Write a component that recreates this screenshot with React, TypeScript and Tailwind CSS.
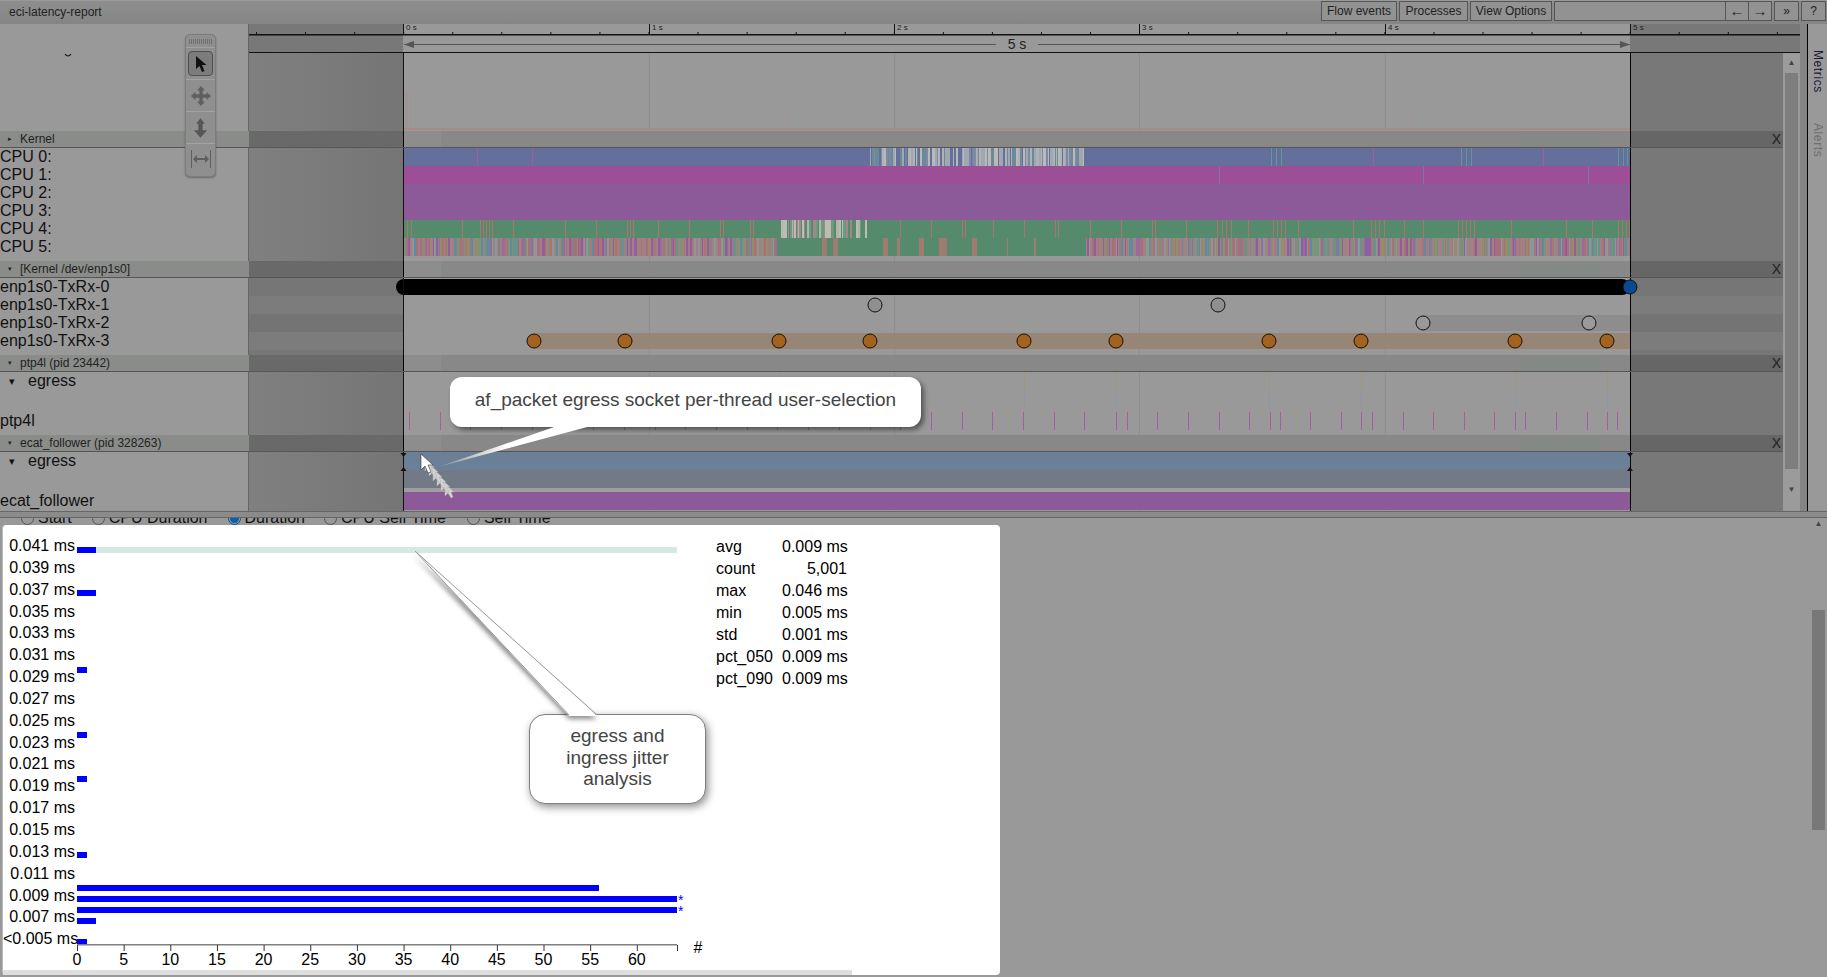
import type { ReactNode } from "react";

const ORANGE_X = [534, 625, 779, 870, 1024, 1116, 1269, 1361, 1515, 1607];
const GRID_X = [649, 894, 1139, 1385];

// small repeatable random so the stripes stay the same on each load
function rng(seed: number) {
  let s = seed;
  return () => {
    s = (s * 16807) % 2147483647;
    return s / 2147483647;
  };
}

function stripes(seed: number, from: number, to: number, colors: string[], minW = 1, maxW = 2) {
  const r = rng(seed);
  const out: { x: number; w: number; c: string }[] = [];
  let x = from;
  while (x < to) {
    const w = Math.min(minW + Math.floor(r() * (maxW - minW + 1)), to - x);
    out.push({ x, w, c: colors[Math.floor(r() * colors.length)] });
    x += w;
  }
  return out;
}

const CPU5_COLORS = ["#a07a7c", "#a08082", "#a87276", "#a08082", "#6a928a", "#5f8aa0", "#986aa0", "#a08480", "#968c66", "#8c9898", "#945ca0", "#a86e7a", "#7a947a"];
const CPU0_MID = stripes(7, 870, 1084, ["#aeb2b4", "#64709b", "#b8bab6", "#6a8a9a", "#8088a4", "#a0a6b2"]);
const CPU4_MID = stripes(11, 781, 868, ["#b2b4a8", "#558a6d", "#bcbcb0", "#a08888", "#6a9a80"]);
const CPU5_A = stripes(13, 403, 777, CPU5_COLORS);
const CPU5_B = stripes(17, 1086, 1630, CPU5_COLORS);
const CPU5_C = stripes(19, 777, 1086, ["#558a6d", "#558a6d", "#558a6d", "#558a6d", "#558a6d", "#558a6d", "#558a6d", "#558a6d", "#558a6d", "#a07c70"], 1, 5);
const CPU4_RED = [407, 411, 462, 480, 483, 486, 489, 492, 513, 565, 596, 627, 630, 633, 658, 689, 720, 723, 750, 753, 900, 931, 962, 965, 993, 1024, 1055, 1058, 1090, 1121, 1152, 1155, 1186, 1217, 1222, 1226, 1231, 1248, 1273, 1277, 1281, 1285, 1298, 1353, 1371, 1375, 1379, 1384, 1404, 1423, 1458, 1462, 1466, 1470, 1474, 1511, 1566, 1592, 1618, 1622, 1626, 1629];
const PTP_TICKS = [
  ...Array.from({ length: 23 }, (_, i) => Math.round(409 + i * 30.7)),
  1023, 1116, 1127, 1157, 1188, 1219, 1249, 1270, 1280, 1310, 1341, 1361, 1372, 1403, 1433, 1464, 1494, 1515, 1525, 1556, 1587, 1607, 1617,
];

const HIST_LABELS = ["0.041", "0.039", "0.037", "0.035", "0.033", "0.031", "0.029", "0.027", "0.025", "0.023", "0.021", "0.019", "0.017", "0.015", "0.013", "0.011", "0.009", "0.007", "<0.005"];
const HIST_BARS = [
  { y: 547, w: 19 },
  { y: 590, w: 19 },
  { y: 667, w: 10 },
  { y: 732, w: 10 },
  { y: 776, w: 10 },
  { y: 852, w: 10 },
  { y: 885, w: 522 },
  { y: 896, w: 600 },
  { y: 907, w: 600 },
  { y: 918, w: 19 },
  { y: 939, w: 10 },
];
const STATS = [
  ["avg", "0.009 ms"],
  ["count", "5,001"],
  ["max", "0.046 ms"],
  ["min", "0.005 ms"],
  ["std", "0.001 ms"],
  ["pct_050", "0.009 ms"],
  ["pct_090", "0.009 ms"],
];

function TopBar() {
  const btn = "h-[20px] flex items-center justify-center border border-[#555] bg-[#929292] text-[12px] text-[#222]";
  return (
    <div className="h-[24px] flex items-start justify-between bg-linear-to-b from-[#8e8e8e] to-[#858585] border-t border-[#9a9a9a]">
      <div className="pl-[9px] pt-[2px] text-[12px] text-[#222]">eci-latency-report</div>
      <div className="flex gap-[2px] pr-[1px]">
        <div className={`${btn} w-[76px]`}>Flow events</div>
        <div className={`${btn} w-[69px]`}>Processes</div>
        <div className={`${btn} w-[82px]`}>View Options</div>
        <div className="flex">
          <div className={`${btn} w-[172px]`} />
          <div className={`${btn} w-[24px] -ml-px text-[15px]`}>←</div>
          <div className={`${btn} w-[24px] -ml-px text-[15px]`}>→</div>
        </div>
        <div className={`${btn} w-[25px]`}>»</div>
        <div className={`${btn} w-[25px]`}>?</div>
      </div>
    </div>
  );
}

function Ruler() {
  const minor: number[] = [];
  for (let x = 256; x < 1800; x += 49.06) minor.push(x);
  const majors = [
    { x: 403, t: "0 s" },
    { x: 649, t: "1 s" },
    { x: 894, t: "2 s" },
    { x: 1139, t: "3 s" },
    { x: 1385, t: "4 s" },
    { x: 1630, t: "5 s" },
  ];
  return (
    <div className="h-[29px] flex">
      <div className="w-[249px] bg-[#999] border-r border-[#666]" />
      <svg width={1551} height={29} viewBox="249 24 1551 29" className="block">
        <rect x={249} y={24} width={1551} height={29} fill="#787878" />
        <rect x={403} y={24} width={1227} height={29} fill="#999" />
        {minor.map((x) => (
          <rect key={x} x={x} y={32} width={1} height={3} fill="#111" />
        ))}
        {majors.map((m) => (
          <g key={m.x}>
            <rect x={m.x} y={24} width={1} height={11} fill="#111" />
            <text x={m.x + 3} y={30} fontSize={8} fill="#222">{m.t}</text>
          </g>
        ))}
        <rect x={249} y={34} width={1551} height={1.5} fill="#111" />
        <rect x={249} y={52} width={1551} height={1.5} fill="#111" />
        <rect x={404} y={44} width={592} height={1} fill="#555" />
        <rect x={1038} y={44} width={592} height={1} fill="#555" />
        <path d="M404 44.5 L414 41 L414 48 Z" fill="#555" />
        <path d="M1630 44.5 L1620 41 L1620 48 Z" fill="#555" />
        <text x={1017} y={49} fontSize={14} textAnchor="middle" fill="#222">5 s</text>
      </svg>
    </div>
  );
}

function Header({ title, closed }: { title: string; closed?: boolean }) {
  return (
    <div className="h-[17px] flex border-b border-[#555]">
      <div className="w-[249px] bg-[#8a8c8a] flex items-center text-[12px] text-[#222]">
        <span className="w-[20px] pl-[8px] text-[7px]">{closed ? "▸" : "▾"}</span>
        {title}
      </div>
      <div className="w-[154px] bg-[#696969]" />
      <div className="w-[1227px] bg-[#888] border-l border-black flex justify-between">
        <div className="w-[37px] bg-[#8d8d8d]" />
        <div className="w-[80px] mr-[30px] bg-[#858985]" />
      </div>
      <div className="w-[153px] bg-[#666] border-l border-black flex items-center justify-end pr-[2px] text-[14px] text-[#222]">X</div>
    </div>
  );
}

function Section({ height, labels, gutter, children }: { height: number; labels?: ReactNode; gutter?: ReactNode; children?: ReactNode }) {
  return (
    <div className="flex" style={{ height }}>
      <div className="w-[249px] bg-[#999] border-r border-[#666] text-[16px] leading-[18px] text-[#111] whitespace-nowrap">{labels}</div>
      <div className="w-[154px] flex flex-col bg-linear-to-r from-[#808080] to-[#757575]">{gutter}</div>
      <svg width={1227} height={height} viewBox={`403 0 1227 ${height}`} className="block relative overflow-visible bg-[#999]">
        {GRID_X.map((x) => (
          <rect key={x} x={x} y={0} width={1} height={height} fill="#8d8d8d" />
        ))}
        {children}
        <rect x={403} y={0} width={1} height={height} fill="#111" />
      </svg>
      <div className="w-[153px] flex flex-col bg-[#787878] border-l border-black">{gutter}</div>
    </div>
  );
}

function Dot({ x, y, fill }: { x: number; y: number; fill: string }) {
  return <circle cx={x} cy={y} r={7} fill={fill} stroke="#111" strokeWidth={1} />;
}

function Toolbar() {
  return (
    <div className="absolute left-[185px] top-[34px] w-[31px] h-[143px] z-20 flex flex-col items-center rounded-[5px] border border-[#7c7c7c] bg-[#8f8f8f] shadow-[0_1px_2px_rgba(0,0,0,0.3)]">
      <div className="h-[13px] w-full flex items-center justify-center border-b border-[#a2a2a2]">
        <div className="w-[24px] h-[5px] bg-[repeating-linear-gradient(90deg,#707070_0,#707070_1px,#8f8f8f_1px,#8f8f8f_2px)]" />
      </div>
      <div className="h-[32px] w-full flex items-center justify-center border-b border-[#a2a2a2]">
        <div className="w-[25px] h-[25px] flex items-center justify-center rounded-[4px] border border-[#4f4f4f] bg-[#7c7c7c]">
          <svg width={14} height={18} viewBox="0 0 14 18">
            <path d="M2 1 L2 14 L5.5 11 L8 17 L10.5 16 L8 10 L12.5 10 Z" fill="#111" />
          </svg>
        </div>
      </div>
      <div className="h-[32px] w-full flex items-center justify-center border-b border-[#a2a2a2]">
        <svg width={20} height={20} viewBox="0 0 18 18" fill="#5f5f5f">
          <path d="M9 0 L12.5 4 L10.5 4 L10.5 7.5 L14 7.5 L14 5.5 L18 9 L14 12.5 L14 10.5 L10.5 10.5 L10.5 14 L12.5 14 L9 18 L5.5 14 L7.5 14 L7.5 10.5 L4 10.5 L4 12.5 L0 9 L4 5.5 L4 7.5 L7.5 7.5 L7.5 4 L5.5 4 Z" />
        </svg>
      </div>
      <div className="h-[32px] w-full flex items-center justify-center border-b border-[#a2a2a2]">
        <svg width={13} height={20} viewBox="0 0 12 18" fill="#565656">
          <path d="M6 0 L10 5 L8 5 L8 11 L12 11 L6 18 L0 11 L4 11 L4 5 L2 5 Z" />
        </svg>
      </div>
      <div className="flex-1 w-full flex items-center justify-center pb-[2px]">
        <svg width={20} height={18} viewBox="0 0 20 18" fill="#5f5f5f">
          <rect x={0} y={0} width={1} height={18} />
          <rect x={19} y={0} width={1} height={18} />
          <path d="M2 9 L6 5 L6 8 L14 8 L14 5 L18 9 L14 13 L14 10 L6 10 L6 13 Z" />
        </svg>
      </div>
    </div>
  );
}

function Callouts() {
  return (
    <>
      <div className="absolute left-[450px] top-[377px] w-[471px] h-[50px] z-30 flex items-center justify-center pb-[3px] rounded-[12px] bg-white shadow-[3px_3px_5px_rgba(0,0,0,0.45)] text-[19px] text-[#444] whitespace-nowrap">
        af_packet egress socket per-thread user-selection
      </div>
      <svg width={170} height={44} viewBox="430 426 170 44" className="absolute left-[430px] top-[426px] z-30">
        <defs>
          <linearGradient id="wedge" x1="0" x2="1" y1="0" y2="0">
            <stop offset="0" stopColor="#8f8f8f" />
            <stop offset="0.45" stopColor="#fff" />
          </linearGradient>
        </defs>
        <path d="M557 426 L591 426 L438 467 Z" fill="url(#wedge)" />
      </svg>
      <svg width={200} height={175} viewBox="410 546 200 175" className="absolute left-[410px] top-[546px] z-30 overflow-visible">
        <defs>
          <filter id="blur" x="-20%" y="-20%" width="140%" height="140%">
            <feGaussianBlur stdDeviation="2.5" />
          </filter>
        </defs>
        <path d="M415 551 L572 716 L600 716 Z" fill="#000" opacity={0.45} filter="url(#blur)" transform="translate(-3 3)" />
        <path d="M415 551 L569 716 L597 716 Z" fill="#fff" />
        <path d="M569 715 L415 551 L597 715" fill="none" stroke="#999" strokeWidth={1} />
      </svg>
      <div className="absolute left-[529px] top-[714px] w-[177px] h-[90px] z-20 flex items-center justify-center pb-[3px] rounded-[16px] border border-[#808080] bg-white shadow-[2px_3px_8px_rgba(0,0,0,0.45)] text-center text-[19px] leading-[21.5px] text-[#444]">
        <div>
          egress and
          <br />
          ingress jitter
          <br />
          analysis
        </div>
      </div>
      <svg width={36} height={46} viewBox="0 0 36 46" className="absolute left-[419px] top-[453px] z-30">
        {[30, 25, 20, 15, 10, 5].map((d) => (
          <path key={d} transform={`translate(${d * 0.8} ${d})`} d="M2 1 L2 13 L5 10 L8 15 L10 14 L8 9 L11 9 Z" fill="#d4d4d4" stroke="#aaa" strokeWidth={0.5} />
        ))}
        <path d="M2 1 L2 17 L6 13 L9 20 L12 19 L9 12 L14 12 Z" fill="#fff" stroke="#333" strokeWidth={0.6} />
      </svg>
    </>
  );
}

function Histogram() {
  const ticks = Array.from({ length: 13 }, (_, i) => i * 5);
  return (
    <div className="w-[998px] h-[450px] flex flex-col rounded-[4px] bg-white border-l border-[#bbb] text-black">
      <div className="flex-1 flex min-h-0">
        <div className="w-[72px] pt-[10px] text-[16px] text-right whitespace-nowrap">
          {HIST_LABELS.map((l) => (
            <div key={l} className="h-[21.85px] leading-[21.85px]">{l} ms</div>
          ))}
        </div>
        <svg width={630} height={444} viewBox="75 525 630 444" className="block shrink-0 overflow-visible">
          <rect x={77} y={547} width={600} height={6} fill="#d5e9e2" />
          {HIST_BARS.map((b) => (
            <rect key={b.y} x={77} y={b.y} width={b.w} height={6} fill="#0000ff" />
          ))}
          <text x={678} y={905} fontSize={14} fill="#0000ff">*</text>
          <text x={678} y={916} fontSize={14} fill="#0000ff">*</text>
          <rect x={77} y={944} width={600} height={1.5} fill="#808080" />
          {ticks.map((t) => (
            <g key={t}>
              <rect x={77 + t * 9.33} y={945} width={1} height={6} fill="#333" />
              <text x={77 + t * 9.33} y={965} fontSize={16} textAnchor="middle" fill="#000">{t}</text>
            </g>
          ))}
          <rect x={677} y={945} width={1} height={6} fill="#333" />
          <text x={698} y={953} fontSize={16} textAnchor="middle" fill="#000">#</text>
        </svg>
        <div className="ml-[11px] pt-[11px] grid grid-cols-[66px_65px] auto-rows-[22px] text-[16px] leading-[22px] h-fit whitespace-nowrap">
          {STATS.map(([k, v]) => (
            <div key={k} className="contents">
              <div>{k}</div>
              <div className="text-right">{v}</div>
            </div>
          ))}
        </div>
      </div>
      <div className="h-[5px] w-[849px] bg-[#dedede]" />
    </div>
  );
}

function Radio({ label, on, className }: { label: string; on?: boolean; className: string }) {
  return (
    <div className={`flex items-center gap-[4px] whitespace-nowrap ${className}`}>
      <div className={`w-[13px] h-[13px] rounded-full border flex items-center justify-center ${on ? "border-[#0a4f9a]" : "border-[#555]"}`}>
        {on && <div className="w-[9px] h-[9px] rounded-full bg-[#0a5fb4]" />}
      </div>
      {label}
    </div>
  );
}

export default function App() {
  return (
    <div className="relative w-[1827px] h-[977px] overflow-hidden bg-[#999] font-['Liberation_Sans',Arial,sans-serif]">
      <TopBar />
      <div className="flex">
        <div className="w-[1800px]">
          <Ruler />
          <div className="flex">
            <div className="w-[1783px]">
              <Section
                height={78}
                labels={
                  <div className="pl-[64px]">
                    <svg width={8} height={5} viewBox="0 0 8 5" className="block">
                      <path d="M1 1 Q4 5 7 1" fill="none" stroke="#111" strokeWidth={1.2} />
                    </svg>
                  </div>
                }
              >
                <rect x={403} y={75} width={1227} height={2} fill="#a68a88" />
                {[405, 407, 410].map((x) => (
                  <rect key={x} x={x} y={39} width={1} height={36} fill="#a39090" />
                ))}
                {[784, 1049, 1409].map((x) => (
                  <rect key={x} x={x} y={46} width={1} height={29} fill="#a39593" />
                ))}
                <rect x={1460} y={25} width={1} height={50} fill="#a39593" />
              </Section>
              <Header title="Kernel" closed />
              <Section
                height={113}
                labels={["CPU 0:", "CPU 1:", "CPU 2:", "CPU 3:", "CPU 4:", "CPU 5:"].map((c) => (
                  <div key={c} className="h-[18px]">{c}</div>
                ))}
              >
                <rect x={403} y={0} width={1227} height={18} fill="#64709b" />
                {CPU0_MID.map((s) => (
                  <rect key={s.x} x={s.x} y={0} width={s.w} height={18} fill={s.c} />
                ))}
                {[477, 532, 1373, 1543].map((x) => (
                  <rect key={x} x={x} y={0} width={1} height={18} fill="#a060a0" />
                ))}
                {[1271, 1276, 1281, 1461, 1466, 1471, 1618, 1623, 1627].map((x) => (
                  <rect key={x} x={x} y={0} width={1} height={18} fill="#5f9a95" />
                ))}
                <rect x={403} y={18} width={1227} height={18} fill="#9c4f96" />
                {[1219, 1423, 1588].map((x) => (
                  <rect key={x} x={x} y={18} width={1} height={18} fill="#7a78a8" />
                ))}
                <rect x={403} y={36} width={1227} height={36} fill="#8c5a98" />
                <rect x={403} y={72} width={1227} height={18} fill="#558a6d" />
                {CPU4_RED.map((x) => (
                  <rect key={x} x={x} y={72} width={1} height={18} fill="#a8766e" />
                ))}
                {CPU4_MID.map((s) => (
                  <rect key={s.x} x={s.x} y={72} width={s.w} height={18} fill={s.c} />
                ))}
                {[...CPU5_A, ...CPU5_B, ...CPU5_C].map((s) => (
                  <rect key={s.x} x={s.x} y={90} width={s.w} height={18} fill={s.c} />
                ))}
              </Section>
              <Header title="[Kernel /dev/enp1s0]" />
              <Section
                height={77}
                labels={["enp1s0-TxRx-0", "enp1s0-TxRx-1", "enp1s0-TxRx-2", "enp1s0-TxRx-3"].map((c) => (
                  <div key={c} className="h-[18px]">{c}</div>
                ))}
                gutter={
                  <>
                    <div className="h-[18px] bg-[#767676]" />
                    <div className="h-[18px] bg-[#7c7c7c]" />
                    <div className="h-[18px] bg-[#747474]" />
                    <div className="h-[18px] bg-[#7c7c7c]" />
                    <div className="h-[5px] bg-[#777]" />
                  </>
                }
              >
                <rect x={396} y={1} width={1234} height={16} rx={8} fill="#000" />
                <Dot x={1630} y={9} fill="#0a4a90" />
                <Dot x={875} y={27} fill="#8f8f8f" />
                <Dot x={1218} y={27} fill="#8f8f8f" />
                <rect x={1423} y={37} width={207} height={16} fill="#8d8d8d" />
                <Dot x={1423} y={45} fill="#999" />
                <Dot x={1589} y={45} fill="#999" />
                <rect x={534} y={55} width={1096} height={16} fill="#978675" />
                {ORANGE_X.map((x) => (
                  <Dot key={x} x={x} y={63} fill="#a5621f" />
                ))}
              </Section>
              <Header title="ptp4l (pid 23442)" />
              <Section
                height={63}
                labels={
                  <>
                    <div className="h-[18px] flex">
                      <span className="w-[28px] pl-[9px] text-[11px]">▾</span>egress
                    </div>
                    <div className="h-[22px]" />
                    <div className="h-[18px]">ptp4l</div>
                  </>
                }
              >
                {ORANGE_X.map((x) => (
                  <g key={x}>
                    <rect x={x} y={0} width={1} height={18} fill="#a3947c" />
                    <rect x={x} y={18} width={1} height={18} fill="#8d97a3" />
                  </g>
                ))}
                {PTP_TICKS.map((x) => (
                  <rect key={x} x={x} y={40} width={1} height={18} fill="#a85aa4" />
                ))}
              </Section>
              <Header title="ecat_follower (pid 328263)" />
              <Section
                height={59}
                labels={
                  <>
                    <div className="h-[18px] flex">
                      <span className="w-[28px] pl-[9px] text-[11px]">▾</span>egress
                    </div>
                    <div className="h-[22px]" />
                    <div className="h-[18px]">ecat_follower</div>
                  </>
                }
              >
                <rect x={403} y={0} width={1227} height={18} fill="#6b8097" />
                <rect x={403} y={18} width={1227} height={18} fill="#727987" />
                <rect x={403} y={36} width={1227} height={4} fill="#9e9e9e" />
                <rect x={403} y={40} width={1227} height={18} fill="#8c5a98" />
                {[403.5, 1630].map((x) => (
                  <g key={x}>
                    <path d={`M${x - 3} 1 L${x + 3} 1 L${x} 5 Z`} fill="#111" />
                    <path d={`M${x - 3} 19 L${x + 3} 19 L${x} 15 Z`} fill="#111" />
                  </g>
                ))}
              </Section>
            </div>
            <div className="w-[17px] flex flex-col items-center bg-[#9b9b9b]">
              <div className="h-[20px] flex items-center text-[8px] text-[#444]">▲</div>
              <div className="w-[13px] h-[396px] bg-[#7e7e7e]" />
              <div className="h-[42px] flex items-center text-[8px] text-[#444]">▼</div>
            </div>
          </div>
        </div>
        <div className="w-[7px] bg-[#848484]" />
        <div className="w-[20px] border-l border-black bg-[#999] pt-[26px] flex flex-col items-center text-[12px] tracking-[0.6px]">
          <div className="text-[#1a1a3a] [writing-mode:vertical-rl]">Metrics</div>
          <div className="mt-[30px] text-[#6f6f6f] [writing-mode:vertical-rl]">Alerts</div>
        </div>
      </div>

      <div className="h-[7px] bg-[#8b8b8b] border-t border-b border-[#666]" />
      <div className="flex">
        <div className="w-[1810px] pl-[2px]">
          <div className="h-[7px] relative overflow-hidden text-[16px] text-[#111]">
            <div className="h-[18px] -mt-[9px] flex">
              <Radio label="Start" className="ml-[19px]" />
              <Radio label="CPU Duration" className="ml-[20px]" />
              <Radio label="Duration" on className="ml-[20px]" />
              <Radio label="CPU Self Time" className="ml-[19px]" />
              <Radio label="Self Time" className="ml-[21px]" />
            </div>
          </div>
          <Histogram />
        </div>
        <div className="w-[17px] flex flex-col items-center">
          <div className="h-[12px] flex items-center text-[8px] text-[#444]">▲</div>
          <div className="mt-[80px] w-[13px] h-[220px] bg-[#787878]" />
        </div>
      </div>

      <Toolbar />
      <Callouts />
    </div>
  );
}
